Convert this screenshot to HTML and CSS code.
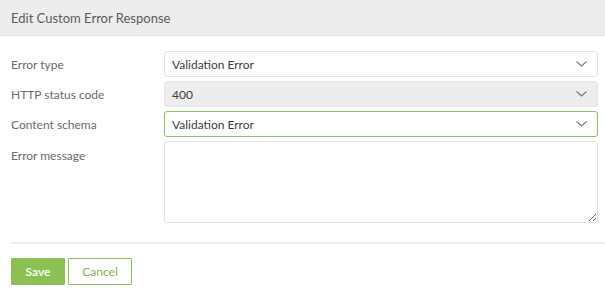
FILE: index.html
```html
<!DOCTYPE html>
<html>
<head>
<meta charset="utf-8">
<link rel="stylesheet" href="styles.css">
</head>
<body>
<div class="dialog">
  <div class="header">Edit Custom Error Response</div>
  <div class="form">
    <div class="row">
      <label class="label">Error type</label>
      <div class="select">
        <span>Validation Error</span>
        <svg class="chev" width="11" height="6" viewBox="0 0 11 6"><path d="M0.5 0.5 L5.5 5 L10.5 0.5" fill="none" stroke="#777" stroke-width="1.1"/></svg>
      </div>
    </div>
    <div class="row">
      <label class="label">HTTP status code</label>
      <div class="select disabled">
        <span>400</span>
        <svg class="chev" width="11" height="6" viewBox="0 0 11 6"><path d="M0.5 0.5 L5.5 5 L10.5 0.5" fill="none" stroke="#777" stroke-width="1.1"/></svg>
      </div>
    </div>
    <div class="row">
      <label class="label">Content schema</label>
      <div class="select focused">
        <span>Validation Error</span>
        <svg class="chev" width="11" height="6" viewBox="0 0 11 6"><path d="M0.5 0.5 L5.5 5 L10.5 0.5" fill="none" stroke="#777" stroke-width="1.1"/></svg>
      </div>
    </div>
    <div class="row top">
      <label class="label">Error message</label>
      <textarea class="textarea"></textarea>
    </div>
  </div>
  <div class="sep"></div>
  <div class="actions">
    <button class="btn save">Save</button>
    <button class="btn cancel">Cancel</button>
  </div>
</div>
</body>
</html>
```

FILE: styles.css
```css
* { box-sizing: border-box; }
html, body { margin: 0; padding: 0; background: #fff; }
body { font-family: "Lato", "Open Sans", sans-serif; font-size: 12px; color: #555; }
.dialog { width: 605px; height: 296px; }
.header {
  height: 36px;
  background: #ededed;
  border-bottom: 1px solid #e2e2e2;
  padding: 0 11px;
  display: flex;
  align-items: center;
  font-size: 13px;
  color: #5a5a5a;
}
.form {
  padding: 15px 7px 0 11px;
  display: flex;
  flex-direction: column;
  gap: 4px;
}
.row { display: flex; align-items: center; }
.row.top { align-items: flex-start; }
.label { width: 153px; color: #6a6a6a; font-size: 12px; }
.row.top .label { padding-top: 7px; }
.select {
  flex: 1;
  height: 26px;
  border: 1px solid #e3e3e3;
  border-radius: 3px;
  display: flex;
  align-items: center;
  justify-content: space-between;
  padding: 0 10px 0 7px;
  color: #3c3c3c;
  background: #fff;
}
.select.disabled { background: #ededed; border-color: #e6e6e6; }
.select.focused { border-color: #8cc65a; }
.chev { display: block; }
.textarea {
  flex: 1;
  height: 82px;
  border: 1px solid #e3e3e3;
  border-radius: 3px;
  resize: vertical;
  font-family: inherit;
  margin: 0;
}
.sep {
  margin: 19px 0 0 11px;
  height: 2px;
  background: #ececec;
}
.actions { display: flex; gap: 3px; padding: 14px 0 0 11px; }
.btn {
  height: 27px;
  font-family: inherit;
  font-size: 12px;
  border-radius: 1px;
  cursor: pointer;
}
.save { width: 54px; background: #8bc152; border: 1px solid #8bc152; color: #fff; font-weight: 600; }
.cancel { width: 64px; background: #fff; border: 1px solid #8bc152; color: #7ab648; }
```
